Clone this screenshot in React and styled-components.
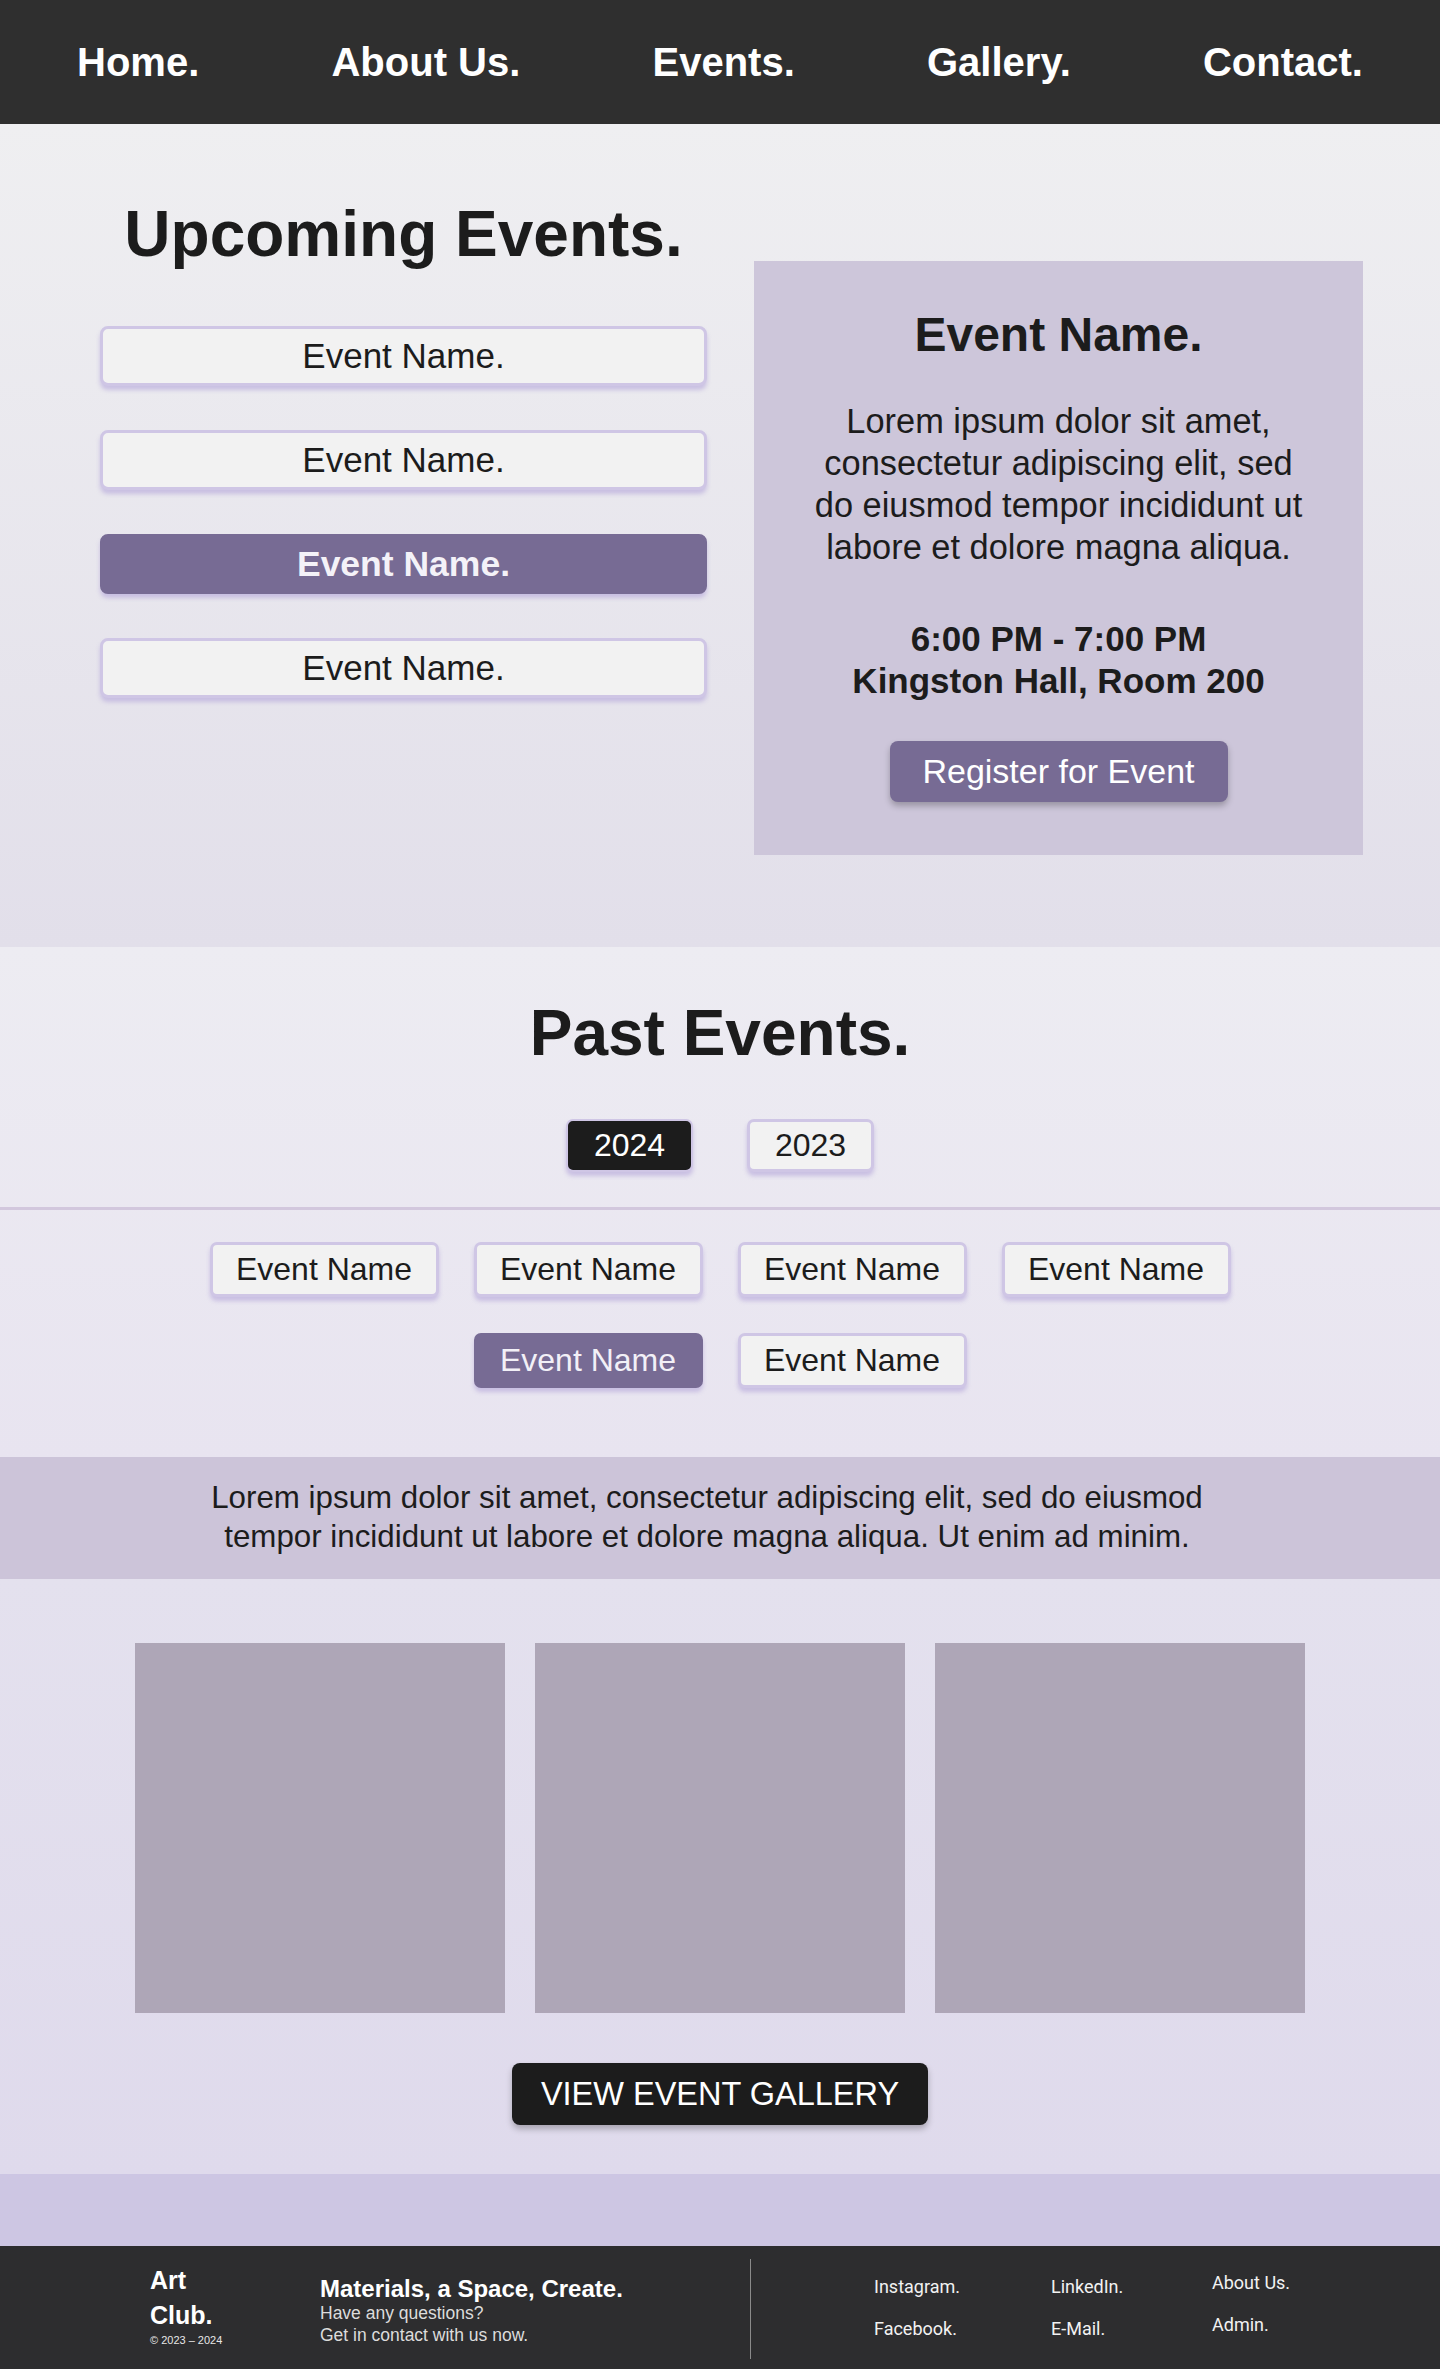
import React from 'react';
import styled, { createGlobalStyle } from 'styled-components';

const GlobalStyle = createGlobalStyle`
  * {
    box-sizing: border-box;
  }

  body {
    margin: 0;
    font-family: "Liberation Sans", Arial, sans-serif;
    color: #1c1c1c;
    background: #2d2d2f;
  }
`;

const Page = styled.div`
  width: 1440px;
  display: flex;
  flex-direction: column;
`;

/* ---------- nav ---------- */

const Nav = styled.nav`
  height: 124px;
  background: #2f2f2f;
  display: flex;
  align-items: center;
  justify-content: space-between;
  padding: 0 77px;
`;

const NavLink = styled.a`
  color: #ffffff;
  font-size: 40px;
  font-weight: 700;
  line-height: 1.15;
  text-decoration: none;
`;

/* ---------- upcoming ---------- */

const Hero = styled.section`
  background: linear-gradient(180deg, #efeff1 0%, #e2dfea 100%);
  display: grid;
  grid-template-columns: 607px 609px;
  column-gap: 47px;
  align-items: start;
  padding: 73px 0 92px 100px;
`;

const LeftCol = styled.div`
  display: flex;
  flex-direction: column;
  align-items: stretch;
`;

const Heading = styled.h1`
  margin: 0;
  font-size: 64px;
  font-weight: 700;
  line-height: 74px;
  text-align: center;
`;

const EventList = styled.div`
  margin-top: 55px;
  display: flex;
  flex-direction: column;
  gap: 44px;
`;

const EventButton = styled.button`
  height: 60px;
  width: 100%;
  border-radius: 8px;
  border: 3px solid ${(props) => (props.active ? '#776b94' : '#cfc6e5')};
  background: ${(props) => (props.active ? '#776b94' : '#f2f2f2')};
  color: ${(props) => (props.active ? '#f4f2f8' : '#1c1c1c')};
  font-family: inherit;
  font-size: ${(props) => (props.active ? '35.5px' : '35px')};
  font-weight: ${(props) => (props.active ? 700 : 400)};
  box-shadow: 0 4px 4px rgba(190, 178, 222, 0.75);
  padding: 0;
  cursor: pointer;
`;

const DetailCard = styled.div`
  margin-top: 64px;
  background: #cdc6da;
  padding: 47px 20px 53px;
  display: flex;
  flex-direction: column;
  align-items: center;
  text-align: center;
`;

const CardTitle = styled.h2`
  margin: 0;
  font-size: 48px;
  font-weight: 700;
  line-height: 53px;
`;

const CardText = styled.p`
  margin: 39px 0 0;
  font-size: 34.4px;
  line-height: 42px;
`;

const CardMeta = styled.p`
  margin: 50px 0 0;
  font-size: 35px;
  font-weight: 700;
  line-height: 42px;
`;

const RegisterButton = styled.button`
  margin-top: 39px;
  width: 338px;
  height: 61px;
  border: none;
  border-radius: 8px;
  background: #776b94;
  color: #ffffff;
  font-family: inherit;
  font-size: 34px;
  box-shadow: 0 4px 6px rgba(0, 0, 0, 0.25);
  cursor: pointer;
`;

/* ---------- past ---------- */

const Past = styled.section`
  background: linear-gradient(180deg, #edecf2 0%, #e8e4f0 100%);
  padding: 49px 0 69px;
  display: flex;
  flex-direction: column;
  align-items: center;
`;

const YearRow = styled.div`
  margin-top: 49px;
  display: flex;
  gap: 54px;
`;

const YearButton = styled.button`
  width: 127px;
  height: 53px;
  border-radius: 7px;
  border: ${(props) => (props.active ? '2px' : '3px')} solid #cfc6e5;
  background: ${(props) => (props.active ? '#1c1c1c' : '#f2f2f2')};
  color: ${(props) => (props.active ? '#ffffff' : '#1c1c1c')};
  font-family: inherit;
  font-size: 32px;
  box-shadow: 0 4px 4px rgba(190, 178, 222, 0.75);
  padding: 0;
  cursor: pointer;
`;

const Divider = styled.hr`
  align-self: stretch;
  margin: 35px 0 0;
  border: none;
  height: 3px;
  background: #d2c7dd;
`;

const ChipGrid = styled.div`
  margin-top: 32px;
  width: 1021px;
  display: flex;
  flex-wrap: wrap;
  justify-content: center;
  gap: 36px 35px;
`;

const Chip = styled.button`
  width: 229px;
  height: 55px;
  border-radius: 7px;
  border: 3px solid ${(props) => (props.active ? '#776b94' : '#cfc6e5')};
  background: ${(props) => (props.active ? '#776b94' : '#f2f2f2')};
  color: ${(props) => (props.active ? '#f2f0f7' : '#1c1c1c')};
  font-family: inherit;
  font-size: 32px;
  box-shadow: 0 4px 4px rgba(190, 178, 222, 0.75);
  padding: 0;
  cursor: pointer;
`;

const Band = styled.div`
  background: #ccc4d9;
  padding: 21px 26px 23px 0;
  text-align: center;
  font-size: 31.3px;
  line-height: 39px;
`;

/* ---------- gallery ---------- */

const Gallery = styled.section`
  background: linear-gradient(180deg, #e4e1ee 0%, #dfdaec 100%);
  padding: 64px 0 49px;
  display: flex;
  flex-direction: column;
  align-items: center;
`;

const Thumbs = styled.div`
  display: flex;
  gap: 30px;
`;

const Thumb = styled.div`
  width: 370px;
  height: 370px;
  background: #aea6b7;
`;

const GalleryButton = styled.button`
  margin-top: 50px;
  width: 416px;
  height: 62px;
  border: none;
  border-radius: 8px;
  background: #1c1c1c;
  color: #ffffff;
  font-family: inherit;
  font-size: 32.5px;
  box-shadow: 0 4px 6px rgba(0, 0, 0, 0.25);
  cursor: pointer;
`;

const Spacer = styled.div`
  height: 72px;
  background: #cdc6e3;
`;

/* ---------- footer ---------- */

const Footer = styled.footer`
  height: 125px;
  background: #2d2d2f;
  color: #ffffff;
  display: flex;
  align-items: flex-start;
  padding: 13px 0 0 150px;
`;

const Brand = styled.div`
  width: 170px;
  margin-top: 4px;
  font-size: 25px;
  font-weight: 700;
  line-height: 35px;
`;

const Copy = styled.div`
  font-size: 11px;
  font-weight: 400;
  line-height: 14px;
  color: #e6e6e6;
`;

const Tagline = styled.div`
  width: 430px;
  margin-top: 16px;
`;

const TagTitle = styled.div`
  font-size: 24px;
  font-weight: 700;
  line-height: 27px;
`;

const TagText = styled.div`
  font-size: 17.5px;
  line-height: 22px;
  color: #dcdcdc;
`;

const VLine = styled.div`
  width: 1px;
  height: 100px;
  background: #8a8a8a;
`;

const LinkCols = styled.div`
  margin-left: 123px;
  display: grid;
  grid-template-columns: 177px 161px auto;
`;

const LinkCol = styled.div`
  display: flex;
  flex-direction: column;
  gap: 20px;
  margin-top: ${(props) => (props.raised ? '13px' : '17px')};
`;

const FooterLink = styled.a`
  font-family: Roboto, "Liberation Sans", sans-serif;
  font-size: 18px;
  line-height: 22px;
  color: #f2f2f2;
  text-decoration: none;
`;

const upcoming = ['Event Name.', 'Event Name.', 'Event Name.', 'Event Name.'];
const past = ['Event Name', 'Event Name', 'Event Name', 'Event Name', 'Event Name', 'Event Name'];

const App = () => {
  return (
    <>
      <GlobalStyle />
      <Page>
        <Nav>
          <NavLink href="#">Home.</NavLink>
          <NavLink href="#">About Us.</NavLink>
          <NavLink href="#">Events.</NavLink>
          <NavLink href="#">Gallery.</NavLink>
          <NavLink href="#">Contact.</NavLink>
        </Nav>

        <Hero>
          <LeftCol>
            <Heading>Upcoming Events.</Heading>
            <EventList>
              {upcoming.map((name, i) => (
                <EventButton key={i} active={i === 2}>
                  {name}
                </EventButton>
              ))}
            </EventList>
          </LeftCol>
          <DetailCard>
            <CardTitle>Event Name.</CardTitle>
            <CardText>
              Lorem ipsum dolor sit amet,
              <br />
              consectetur adipiscing elit, sed
              <br />
              do eiusmod tempor incididunt ut
              <br />
              labore et dolore magna aliqua.
            </CardText>
            <CardMeta>
              6:00 PM - 7:00 PM
              <br />
              Kingston Hall, Room 200
            </CardMeta>
            <RegisterButton>Register for Event</RegisterButton>
          </DetailCard>
        </Hero>

        <Past>
          <Heading>Past Events.</Heading>
          <YearRow>
            <YearButton active>2024</YearButton>
            <YearButton>2023</YearButton>
          </YearRow>
          <Divider />
          <ChipGrid>
            {past.map((name, i) => (
              <Chip key={i} active={i === 4}>
                {name}
              </Chip>
            ))}
          </ChipGrid>
        </Past>

        <Band>
          Lorem ipsum dolor sit amet, consectetur adipiscing elit, sed do eiusmod
          <br />
          tempor incididunt ut labore et dolore magna aliqua. Ut enim ad minim.
        </Band>

        <Gallery>
          <Thumbs>
            <Thumb />
            <Thumb />
            <Thumb />
          </Thumbs>
          <GalleryButton>VIEW EVENT GALLERY</GalleryButton>
        </Gallery>

        <Spacer />

        <Footer>
          <Brand>
            Art
            <br />
            Club.
            <Copy>© 2023 – 2024</Copy>
          </Brand>
          <Tagline>
            <TagTitle>Materials, a Space, Create.</TagTitle>
            <TagText>Have any questions?</TagText>
            <TagText>Get in contact with us now.</TagText>
          </Tagline>
          <VLine />
          <LinkCols>
            <LinkCol>
              <FooterLink href="#">Instagram.</FooterLink>
              <FooterLink href="#">Facebook.</FooterLink>
            </LinkCol>
            <LinkCol>
              <FooterLink href="#">LinkedIn.</FooterLink>
              <FooterLink href="#">E-Mail.</FooterLink>
            </LinkCol>
            <LinkCol raised>
              <FooterLink href="#">About Us.</FooterLink>
              <FooterLink href="#">Admin.</FooterLink>
            </LinkCol>
          </LinkCols>
        </Footer>
      </Page>
    </>
  );
};

export default App;
